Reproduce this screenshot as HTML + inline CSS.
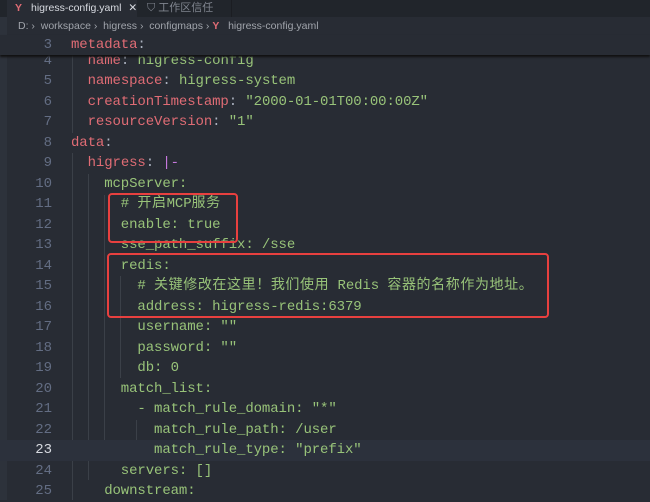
<!DOCTYPE html>
<html><head><meta charset="utf-8"><style>
*{margin:0;padding:0;box-sizing:border-box}
body{width:650px;height:500px;overflow:hidden;background:#282c34;font-family:"Liberation Sans","Noto Sans CJK SC",sans-serif;position:relative}
.tabs{position:absolute;left:0;top:0;width:650px;height:17px;background:#21252b}
.tab1{position:absolute;left:7px;top:0;width:130px;height:17px;background:#282c34;color:#d7dae0;font-size:10.5px;line-height:16px;padding-left:24px;white-space:nowrap;overflow:hidden}
.tab2{position:absolute;left:137px;top:0;width:95px;height:17px;color:#7f848e;font-size:11px;line-height:16px;padding-left:10px;border-right:1px solid #1b1d22;white-space:nowrap}
.y{color:#e06c75;font-weight:bold;position:absolute}
.crumb{position:absolute;left:18px;top:17px;font-size:10.5px;color:#a0a4ab;line-height:19px;white-space:pre}
.side{position:absolute;left:0;top:17px;width:7px;height:483px;background:#2d323b}
.code{position:absolute;left:0;top:0;width:650px;font-family:"Liberation Mono","Noto Sans CJK SC",monospace;font-size:14px;letter-spacing:-0.1px}
.l{position:absolute;left:0;height:20.5px;line-height:20.5px;width:650px;white-space:pre}
.n{position:absolute;left:0;width:52px;text-align:right;color:#636d83;letter-spacing:0}
.t{position:absolute;left:71px;color:#abb2bf}
.k{color:#e06c75}.s{color:#98c379}.p{color:#c678dd}
.c{letter-spacing:0.6px}
.sticky{background:#282c34;box-shadow:0 2px 2px #111;z-index:2}
.box{position:absolute;border:2px solid #e8403f;border-radius:4px;z-index:3}
.g{position:absolute;width:1px;background:#3b4048}
</style></head><body>
<div class="tabs">
<div class="tab1"><span class="y" style="left:8px;top:0">Y</span>higress-config.yaml <span style="margin-left:4px">✕</span></div>
<div class="tab2">⛉ 工作区信任</div>
</div>
<div class="side"></div>
<div class="crumb">D: ›  workspace ›  higress ›  configmaps › <span style="color:#e06c75;font-weight:bold">Y</span>   higress-config.yaml</div>
<div class="code">
<div class="g" style="left:72px;top:51px;height:82px"></div>
<div class="g" style="left:72px;top:153px;height:347px"></div>
<div class="g" style="left:88px;top:174px;height:306px"></div>
<div class="g" style="left:104px;top:195px;height:266px"></div>
<div class="g" style="left:120px;top:276px;height:102px"></div>
<div class="g" style="left:136px;top:420px;height:41px"></div>
<div class="l" style="top:440px;background:#2c313c"></div>
<div class="l sticky" style="top:35px;height:20px;line-height:20px"><span class="n">3</span><span class="t"><span class="k">metadata</span>:</span></div>
<div class="l" style="top:50.5px"><span class="n">4</span><span class="t">  <span class="k">name</span>: <span class="s">higress-config</span></span></div>
<div class="l" style="top:71px"><span class="n">5</span><span class="t">  <span class="k">namespace</span>: <span class="s">higress-system</span></span></div>
<div class="l" style="top:91.5px"><span class="n">6</span><span class="t">  <span class="k">creationTimestamp</span>: <span class="s">"2000-01-01T00:00:00Z"</span></span></div>
<div class="l" style="top:112px"><span class="n">7</span><span class="t">  <span class="k">resourceVersion</span>: <span class="s">"1"</span></span></div>
<div class="l" style="top:132.5px"><span class="n">8</span><span class="t"><span class="k">data</span>:</span></div>
<div class="l" style="top:153px"><span class="n">9</span><span class="t">  <span class="k">higress</span>: <span class="p">|-</span></span></div>
<div class="l s" style="top:173.5px"><span class="n">10</span><span class="t s">    mcpServer:</span></div>
<div class="l" style="top:194px"><span class="n">11</span><span class="t s">      # <span class="c">开启</span>MCP<span class="c">服务</span></span></div>
<div class="l" style="top:214.5px"><span class="n">12</span><span class="t s">      enable: true</span></div>
<div class="l" style="top:235px"><span class="n">13</span><span class="t s">      sse_path_suffix: /sse</span></div>
<div class="l" style="top:255.5px"><span class="n">14</span><span class="t s">      redis:</span></div>
<div class="l" style="top:276px"><span class="n">15</span><span class="t s">        # <span class="c">关键修改在这里！我们使用</span> Redis <span class="c">容器的名称作为地址。</span></span></div>
<div class="l" style="top:296.5px"><span class="n">16</span><span class="t s">        address: higress-redis:6379</span></div>
<div class="l" style="top:317px"><span class="n">17</span><span class="t s">        username: ""</span></div>
<div class="l" style="top:337.5px"><span class="n">18</span><span class="t s">        password: ""</span></div>
<div class="l" style="top:358px"><span class="n">19</span><span class="t s">        db: 0</span></div>
<div class="l" style="top:378.5px"><span class="n">20</span><span class="t s">      match_list:</span></div>
<div class="l" style="top:399px"><span class="n">21</span><span class="t s">        - match_rule_domain: "*"</span></div>
<div class="l" style="top:419.5px"><span class="n">22</span><span class="t s">          match_rule_path: /user</span></div>
<div class="l" style="top:440px"><span class="n" style="color:#d7dae0">23</span><span class="t s">          match_rule_type: "prefix"</span></div>
<div class="l" style="top:460.5px"><span class="n">24</span><span class="t s">      servers: []</span></div>
<div class="l" style="top:481px"><span class="n">25</span><span class="t s">    downstream:</span></div>
</div>
<div class="box" style="left:108px;top:193px;width:130px;height:50px"></div>
<div class="box" style="left:107px;top:253px;width:442px;height:65px"></div>
</body></html>
